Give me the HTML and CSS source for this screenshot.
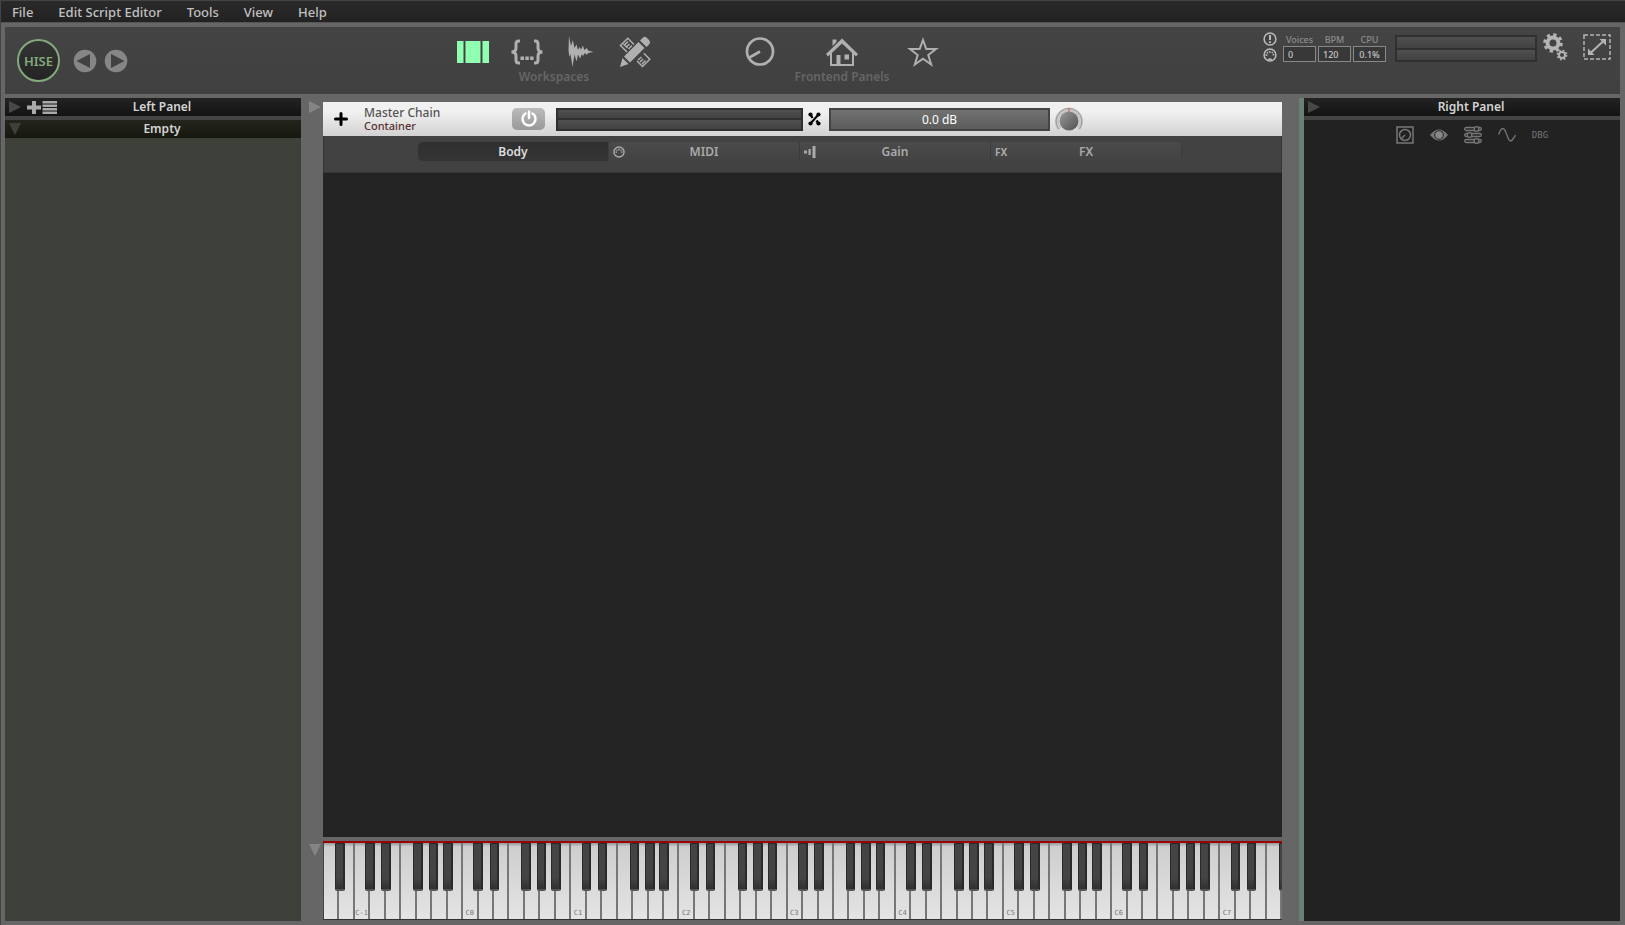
FILE: index.html
```html
<!DOCTYPE html>
<html lang="en">
<head>
<meta charset="utf-8">
<title>HISE</title>
<link rel="stylesheet" href="styles.css">
</head>
<body>
<div class="app">
  <nav class="menu">
    <button>File</button><button>Edit Script Editor</button><button>Tools</button><button>View</button><button>Help</button>
  </nav>

  <header class="toolbar">
    <div class="brand">
      <div class="logo"><span>HISE</span></div>
      <button class="round" aria-label="Back"><svg width="24" height="24" viewBox="0 0 24 24"><circle cx="12" cy="12" r="11.3" fill="#868686"/><path d="M3.500 12 17 5v14z" fill="#414141"/></svg></button>
      <button class="round" aria-label="Forward"><svg width="24" height="24" viewBox="0 0 24 24"><circle cx="12" cy="12" r="11.3" fill="#868686"/><path d="M20.500 12 7 5v14z" fill="#414141"/></svg></button>
    </div>
    <div class="group">
      <div class="icons">
        <button aria-label="Main workspace"><svg width="32" height="32" viewBox="0 0 32 32" fill="#90ffb1"><path d="M0 5h6.500v22H0zM8.500 5h15v22h-15zM25.500 5H32v22h-6.500z"/></svg></button>
        <button aria-label="Scripting workspace"><svg width="32" height="32" viewBox="0 0 32 32"><path d="M9 5H7.500Q5 5 5 8v4q0 4-4.500 4Q5 16 5 20v4q0 3 2.500 3H9M23 5h1.500Q27 5 27 8v4q0 4 4.500 4Q27 16 27 20v4q0 3-2.500 3H23" fill="none" stroke="#b0b0b0" stroke-width="3"/><path d="M9.500 20.500h3.500V24H9.500zM14.300 20.500h3.500V24h-3.500zM19.100 20.500h3.500V24h-3.500z" fill="#b0b0b0"/></svg></button>
        <button aria-label="Sampler workspace"><svg width="32" height="32" viewBox="0 0 32 32"><path d="M3.500 14 4 0l2 10 1.800-6L9.500 12l2-3.500L13 14l1.500-3 1.500 2.500 2-4 1.200 4.500 2.800-2 1 2.500 5.500 1.500-5.500 1-1 2-2-2-2 3-1-2-2 4.500-2-4-1.500 7-2-7L7.500 31 5.500 18 4.300 21z" fill="#b0b0b0"/></svg></button>
        <button aria-label="Custom workspace"><svg width="32" height="32" viewBox="0 0 32 32"><g fill="none" stroke="#b0b0b0" stroke-width="1.500"><path d="M8 16 1.500 9.500l7.300-7.300L15 8.500M18 25l5.500 5.500 7.300-7.300-6-6M4.500 8l4 4M5.500 9l3.500-3.500M7.500 11l3-3M9.500 13 13 9.500M19 24l3.500-3M21 26l3-3M23 28l3.500-3.500"/></g><path d="M5 20.500 19.500 6l6 6L11 26.500zM21 4.500 24 1.500q2-1.500 4 .5l2 2q2 2 .5 4L27.500 11zM3.500 22l6 6-8.500 3z" fill="#b0b0b0"/></svg></button>
      </div>
      <p>Workspaces</p>
    </div>
    <div class="group panels">
      <div class="icons">
        <button aria-label="Knobs"><svg width="32" height="32" viewBox="0 0 32 32" fill="none" stroke="#b0b0b0" stroke-width="2.700"><circle cx="15" cy="15.500" r="13"/><path d="M15 15.500 4.500 21.500"/></svg></button>
        <button aria-label="Home"><svg width="32" height="32" viewBox="0 0 32 32"><path d="M5 17v12h22V17" fill="none" stroke="#b0b0b0" stroke-width="2"/><path d="M6.500 3.500h4V6l-4 4zM10.500 19h4v10h-4zM18.500 18.500h4.500v5h-4.500zM0 18 16 2.500 32 18l-2 2.500L16 7.500 2 20.500z" fill="#b0b0b0"/></svg></button>
        <button aria-label="Favourites"><svg width="32" height="32" viewBox="0 0 32 32"><path d="m16 4 3.300 9h9.700l-7.700 6 2.900 9.500-8.200-5.700-8.200 5.700 2.900-9.500-7.700-6h9.700z" fill="none" stroke="#b0b0b0" stroke-width="2"/></svg></button>
      </div>
      <p>Frontend Panels</p>
    </div>
    <div class="status">
      <div class="leds">
        <svg width="14" height="14" viewBox="0 0 14 14" fill="none" stroke="#bbb" stroke-width="1.500"><circle cx="7" cy="7" r="5.900"/><path d="M7 3v5M7 9.200v1.800" stroke-width="2"/></svg>
        <svg width="14" height="14" viewBox="0 0 14 14" fill="none" stroke="#bbb" stroke-width="1.500"><circle cx="7" cy="7" r="5.900"/><path d="M3.400 8q0-4 3.600-4t3.600 4" stroke-width="1.600" stroke-dasharray="1.500 1"/><path d="M5 12q2-2 4 0"/></svg>
      </div>
      <label class="stat">Voices<input value="0"></label>
      <label class="stat">BPM<input value="120"></label>
      <label class="stat">CPU<input class="mid" value="0.1%"></label>
      <div class="meter master"><i></i><i></i></div>
      <button aria-label="Settings"><svg width="26" height="28" viewBox="0 0 26 28" fill="none" stroke="#b4b4b4"><circle cx="10" cy="10" r="5.500" stroke-width="4"/><circle cx="10" cy="10" r="8.300" stroke-width="3" stroke-dasharray="3.260 3.260"/><circle cx="19" cy="22" r="3" stroke-width="2"/><circle cx="19" cy="22" r="4.600" stroke-width="1.600" stroke-dasharray="1.810 1.810"/></svg></button>
      <button class="expand" aria-label="Fullscreen"><svg width="28" height="26" viewBox="0 0 28 26"><rect x="1" y="1" width="26" height="24" fill="none" stroke="#b4b4b4" stroke-width="1.500" stroke-dasharray="4 2"/><path d="m8 18.500 12-11" stroke="#b4b4b4" stroke-width="2"/><path d="M23 5v6.500L16.500 5zM5 21v-6.500l6.500 6.500z" fill="#b4b4b4"/></svg></button>
    </div>
  </header>

  <main class="work">
    <section class="side left">
      <div class="bar"><button class="fold" aria-label="Fold left panel"><svg width="12" height="12" viewBox="0 0 12 12"><path d="M0 0 12 6 0 12z" fill="#484848"/></svg></button>
        <button class="add" aria-label="Add panel"><svg width="30" height="13" viewBox="0 0 30 13" fill="#aaa"><path d="M5 0h4v4.500h5v4H9V13H5V8.500H0v-4h5zM15.500 0H30v2.500H15.500zM15.500 3.500H30V6H15.500zM15.500 7H30v2.500H15.500zM15.500 10.500H30V13H15.500z"/></svg></button>Left Panel</div>
      <div class="bar olive"><button class="fold" aria-label="Fold empty panel"><svg width="12" height="12" viewBox="0 0 12 12"><path d="M0 0h12L6 12z" fill="#3d4039"/></svg></button>Empty</div>
      <div class="blank"></div>
    </section>

    <div class="gutter">
      <button aria-label="Fold editor"><svg width="12" height="12" viewBox="0 0 12 12"><path d="M0 0 12 6 0 12z" fill="#858585"/></svg></button>
      <button aria-label="Fold keyboard"><svg width="12" height="12" viewBox="0 0 12 12"><path d="M0 0h12L6 12z" fill="#858585"/></svg></button>
    </div>

    <section class="center">
      <div class="editor">
        <div class="chain">
          <button class="plus" aria-label="Add module"><svg width="14" height="14" viewBox="0 0 14 14"><path d="M7 1.500v11M1.500 7h11" stroke="#000" stroke-width="3" stroke-linecap="round"/></svg></button>
          <div class="name"><b>Master Chain</b><span>Container</span></div>
          <button class="power" aria-label="Bypass"><svg width="18" height="18" viewBox="0 0 18 18" fill="none" stroke="#fff" stroke-width="2.500" stroke-linecap="round"><path d="M5.500 3.500a6.500 6.500 0 1 0 7 0M9 1.500V8"/></svg></button>
          <div class="meter level"><i></i><i></i></div>
          <button class="route" aria-label="Routing"><svg width="13" height="14" viewBox="0 0 13 14" stroke="#000" fill="none"><path d="M2.500 11.500 10.500 2.500" stroke-width="2"/><path d="M2.500 2.500 4.500 6M8.500 8.500l2 3" stroke-width="2.400"/><g fill="#000" stroke="none"><circle cx="2.500" cy="2.500" r="2.100"/><circle cx="10.500" cy="2.500" r="2.100"/><circle cx="2.500" cy="11.500" r="2.100"/><circle cx="10.500" cy="11.500" r="2.100"/></g></svg></button>
          <button class="gain">0.0 dB</button>
          <svg class="knob" width="28" height="24" viewBox="0 0 28 24"><defs><linearGradient id="k" x1="0" y1="0" x2="1" y2="1"><stop offset="0" stop-color="#999"/><stop offset="1" stop-color="#505050"/></linearGradient></defs><path d="M4.500 22a12 12 0 1 1 19 0" fill="none" stroke="#c6c6c6" stroke-width="4"/><path d="M3.500 22a13 13 0 1 1 21 0" fill="none" stroke="#999"/><circle cx="14" cy="14" r="9.500" fill="url(#k)"/><path d="M14 1v4" stroke="#c55"/></svg>
        </div>
        <div class="tabrow">
          <div class="tabs">
            <button class="on">Body</button>
            <button><svg width="12" height="12" viewBox="0 0 14 14" fill="none" stroke="#aaa" stroke-width="1.700"><circle cx="7" cy="7" r="5.900"/><path d="M3.800 8q0-4 3.200-4t3.200 4" stroke-dasharray="1.500 1"/></svg>MIDI</button>
            <button><svg width="12" height="12" viewBox="0 0 12 12" fill="#aaa"><path d="M0 4.500h3v3H0zM4.500 3h2.200v6H4.500zM8.500 0h3v12h-3z"/></svg>Gain</button>
            <button><small>FX</small>FX</button>
          </div>
        </div>
        <div class="canvas"></div>
      </div>
      <div class="keyboard" id="keyboard"></div>
    </section>

    <section class="side right">
      <div class="bar"><button class="fold" aria-label="Fold right panel"><svg width="12" height="12" viewBox="0 0 12 12"><path d="M0 0 12 6 0 12z" fill="#484848"/></svg></button>Right Panel</div>
      <div class="tools">
        <div class="toolset">
          <button aria-label="Interface"><svg width="18" height="18" viewBox="0 0 18 18" fill="none" stroke="#777" stroke-width="1.500"><rect x="1" y="1" width="16" height="16"/><circle cx="9" cy="9" r="5.500"/><path d="M9 9 5.500 12.500"/></svg></button>
          <button aria-label="Watch"><svg width="18" height="18" viewBox="0 0 18 18"><path d="M0 9q9-11 18 0-9 11-18 0z" fill="#777"/><circle cx="9" cy="9" r="4.300" fill="#888" stroke="#262626"/></svg></button>
          <button aria-label="Parameters"><svg width="18" height="18" viewBox="0 0 18 18" fill="#262626" stroke="#777" stroke-width="1.300"><rect x=".7" y="1.500" width="16.600" height="3" rx="1.500"/><rect x=".7" y="7.500" width="16.600" height="3" rx="1.500"/><rect x=".7" y="13.500" width="16.600" height="3" rx="1.500"/><circle cx="12.500" cy="3" r="2.300"/><circle cx="5.500" cy="9" r="2.300"/><circle cx="12.500" cy="15" r="2.300"/></svg></button>
          <button aria-label="Waveform"><svg width="18" height="18" viewBox="0 0 18 18"><path d="M.5 8.500C2.500 3 5 0 7.500 5.500c3 7 3 9.500 5 9.500s3-3 5-6" fill="none" stroke="#777" stroke-width="1.300"/></svg></button>
          <button class="dbg">DBG</button>
        </div>
      </div>
    </section>
  </main>
</div>
<script src="keys.js"></script>
</body>
</html>
```
FILE: keys.js
```js
const notes = ['C', 'D', 'E', 'F', 'G', 'A', 'B'];
const sharps = ['C', 'D', 'F', 'G', 'A'];
const keyboard = document.getElementById('keyboard');
for (let i = 0; i < 62; i++) {
  const note = notes[(i + 5) % 7];
  const octave = Math.floor((i + 5) / 7) - 2;
  const key = document.createElement('div');
  key.className = 'key';
  const white = document.createElement('button');
  white.className = 'white';
  white.setAttribute('aria-label', note + octave);
  if (note === 'C') white.textContent = 'C' + octave;
  key.append(white);
  if (sharps.includes(note)) {
    const black = document.createElement('button');
    black.className = 'black sharp-' + note.toLowerCase();
    black.setAttribute('aria-label', note + '#' + octave);
    key.append(black);
  }
  keyboard.append(key);
}
```
FILE: styles.css
```css
* { box-sizing: border-box; }
body { margin: 0; background: #666; font-family: "Noto Sans", sans-serif; font-size: 12px; font-weight: 600; color: #d4d4d4; }
button { margin: 0; padding: 0; border: 0; background: none; font: inherit; color: inherit; }
svg { display: block; }
p { margin: 0; }

.app { display: flex; flex-direction: column; height: 100vh; border-top: 1px solid #444; border-left: 1px solid #444; padding-bottom: 4px; }
.menu { display: flex; gap: 25px; height: 22px; padding-left: 11px; background: linear-gradient(#2a2a2a, #222); border-bottom: 1px solid #555; color: #c0c0c0; font-size: 13px; font-weight: 500; }

.toolbar { display: flex; align-items: flex-start; height: 67px; margin: 4px 5px 4px 4px; background: linear-gradient(#444, #404040); }
.brand { display: flex; align-items: center; gap: 7px; width: 452px; padding: 12px; }
.logo { display: grid; place-items: center; width: 43px; height: 43px; margin-right: 6px; border: 2px solid #83a97c; border-radius: 50%; background: linear-gradient(#343434, #242424); color: #83a97c; font-size: 13px; }
.group { width: 194px; padding-top: 9px; text-align: center; }
.icons { display: flex; justify-content: space-between; }
.group p { color: #666; line-height: 18px; }
.panels { margin-left: 94px; }
.status { display: flex; align-items: flex-start; gap: 2px; margin-left: auto; padding: 4px 9px 0 0; }
.leds { display: flex; flex-direction: column; gap: 2px; margin: 1px 4px 0 0; }
.stat { display: flex; flex-direction: column; align-items: center; width: 33px; color: #8c8c8c; font-size: 9px; font-weight: 500; line-height: 17px; }
.stat input { width: 100%; height: 16px; margin-top: -2px; padding: 0 4px; border: 1px solid #888; background: #383838; color: #c8c8c8; font: 500 9px "Noto Sans", sans-serif; }
.stat .mid { padding: 0; text-align: center; }
.meter { display: flex; flex-direction: column; gap: 2px; padding: 2px; background: #303030; }
.meter i { flex: 1; background: linear-gradient(#505050, #424242); }
.master { width: 142px; height: 27px; margin: 4px 4px 0 7px; }
.status > button { margin-top: 2px; }
.status .expand { margin: 3px 0 0 12px; }

.work { display: flex; flex: 1; min-height: 0; margin: 0 5px 0 4px; }
.side { display: flex; flex-direction: column; background: #444; }
.left { width: 296px; }
.right { width: 321px; border-left: 5px solid #6a8273; }
.bar { position: relative; height: 18px; margin-bottom: 4px; padding-left: 18px; background: linear-gradient(#232323, #131313); text-align: center; line-height: 18px; }
.olive { margin: 0; background: linear-gradient(#24261e, #161810); }
.fold { position: absolute; left: 4px; top: 3px; }
.add { position: absolute; left: 22px; top: 3px; }
.blank { flex: 1; background: #3e4139; }
.gutter { display: flex; flex-direction: column; justify-content: space-between; width: 22px; padding: 3px 2px 65px 8px; }
.center { display: flex; flex: 1; flex-direction: column; min-width: 0; margin: 4px 17px 1px 0; }
.editor { display: flex; flex: 1; flex-direction: column; background: #424242; }
.chain { display: flex; align-items: center; height: 34px; padding-left: 11px; background: linear-gradient(#f0f0f0 30%, #d2d2d2); }
.name { display: flex; flex-direction: column; width: 148px; margin-left: 16px; color: #555; font-size: 12px; font-weight: 500; line-height: 13px; }
.name b { font-weight: 500; }
.name span { color: #5a3232; font-size: 11px; }
.power { display: grid; place-items: center; width: 33px; height: 22px; border-radius: 5px; background: linear-gradient(#bbb, #999); }
.level { width: 247px; height: 23px; margin: 0 5px 0 11px; }
.gain { width: 221px; height: 23px; margin: 0 5px 0 8px; border: 2px solid #444; background: linear-gradient(#717171, #5c5c5c); color: #fff; font-weight: 400; }
.tabrow { height: 37px; padding: 6px 99px 0 94px; border: 1px solid #353535; border-top: 0; }
.tabs { display: grid; grid-template-columns: repeat(4, 1fr); height: 19px; border-radius: 5px; overflow: hidden; }
.tabs button { position: relative; border-right: 1px solid #3c3c3c; background: linear-gradient(#4a4a4a, #434343); color: #aaa; }
.tabs .on { background: linear-gradient(#303030, #343434); color: #ddd; }
.tabs svg, .tabs small { position: absolute; left: 4px; top: 4px; }
.tabs small { font: 700 10px/12px "Noto Sans", sans-serif; }
.canvas { flex: 1; background: #242424; }

.keyboard { display: flex; height: 79px; margin-top: 4px; padding-left: 1px; overflow: hidden; border-top: 2px solid #900; border-bottom: 1px solid #333; background: #444; }
.key { position: relative; flex: 1; min-width: 0; }
.white { display: flex; align-items: flex-end; justify-content: center; width: 100%; height: 100%; padding-bottom: 2px; border-right: 2px solid #777; background: linear-gradient(#999, #cecece 5%, #e4e4e4); color: #777; font: 7px "DejaVu Sans Mono", monospace; }
.black { position: absolute; z-index: 1; top: 0; width: 62%; height: 48px; border: 1px solid #2a2a2a; border-bottom: 2px solid #555; border-right-width: 2px; border-radius: 0 0 2px 2px; background: linear-gradient(#444 75%, #303030); }
.sharp-c { left: 67%; }
.sharp-d, .sharp-a { left: 71%; }
.sharp-f, .sharp-g { left: 77%; }

.tools { display: flex; flex: 1; justify-content: center; align-items: flex-start; padding: 6px 0 0 20px; background: #222; }
.toolset { display: flex; gap: 16px; }
.dbg { color: #777; font: 9px "DejaVu Sans Mono", monospace; }
```
